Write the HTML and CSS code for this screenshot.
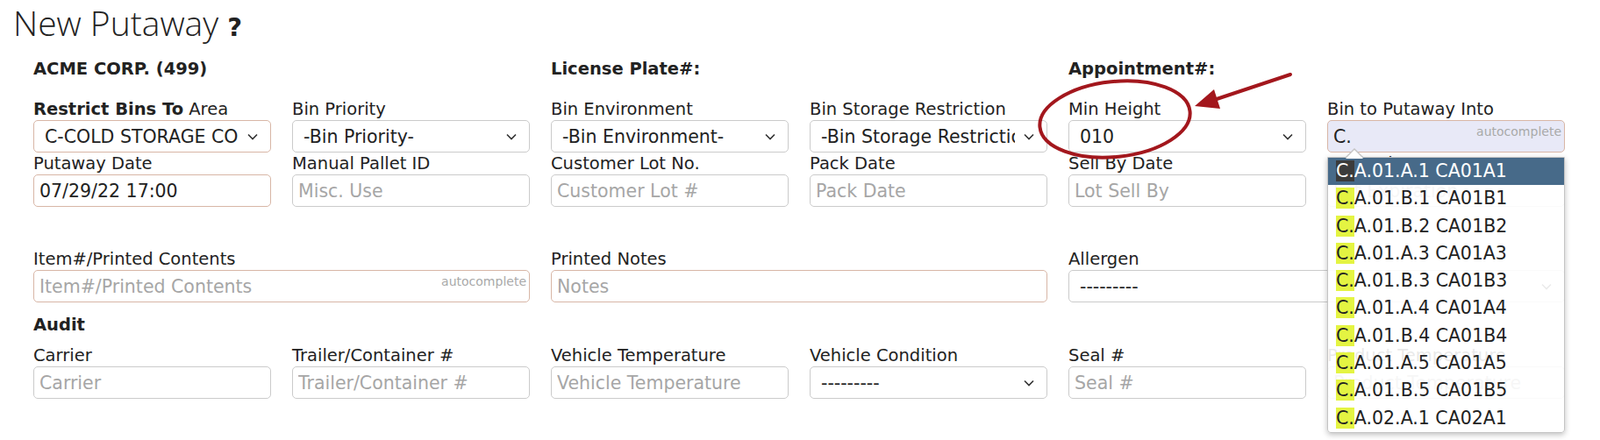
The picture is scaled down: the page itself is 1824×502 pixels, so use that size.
FILE: index.html
```html
<!DOCTYPE html>
<html lang="en">
<head>
  <meta charset="UTF-8" />
  <title>New Putaway</title>
  <link rel="stylesheet" href="styles.css">
</head>
<body>
<div class="page">

  <h1 class="page-title">New Putaway <span class="help">?</span></h1>

  <form class="putaway-form">

    <!-- Header info -->
    <div class="grid info-row">
      <div class="span-2">ACME CORP. (499)</div>
      <div class="span-2">License Plate#:</div>
      <div class="span-2">Appointment#:</div>
    </div>

    <!-- Bin selection -->
    <div class="grid field-row first-row">
      <div class="field">
        <label><b>Restrict Bins To</b> Area</label>
        <div class="select-wrap">
          <select class="control required"><option>C-COLD STORAGE COOLER</option></select>
          <svg class="chevron" width="12" height="8" viewBox="0 0 12 8"><path d="M1 1.5 L6 6.5 L11 1.5" /></svg>
        </div>
      </div>
      <div class="field">
        <label>Bin Priority</label>
        <div class="select-wrap">
          <select class="control"><option>-Bin Priority-</option></select>
          <svg class="chevron" width="12" height="8" viewBox="0 0 12 8"><path d="M1 1.5 L6 6.5 L11 1.5" /></svg>
        </div>
      </div>
      <div class="field">
        <label>Bin Environment</label>
        <div class="select-wrap">
          <select class="control"><option>-Bin Environment-</option></select>
          <svg class="chevron" width="12" height="8" viewBox="0 0 12 8"><path d="M1 1.5 L6 6.5 L11 1.5" /></svg>
        </div>
      </div>
      <div class="field">
        <label>Bin Storage Restriction</label>
        <div class="select-wrap">
          <select class="control"><option>-Bin Storage Restriction-</option></select>
          <svg class="chevron" width="12" height="8" viewBox="0 0 12 8"><path d="M1 1.5 L6 6.5 L11 1.5" /></svg>
        </div>
      </div>
      <div class="field">
        <label>Min Height</label>
        <div class="select-wrap">
          <select class="control"><option>010</option></select>
          <svg class="chevron" width="12" height="8" viewBox="0 0 12 8"><path d="M1 1.5 L6 6.5 L11 1.5" /></svg>
        </div>
      </div>
      <div class="field">
        <label>Bin to Putaway Into</label>
        <div class="input-wrap">
          <input type="text" class="control required lookup" value="C." />
          <span class="hint">autocomplete</span>

          <!-- Autocomplete results -->
          <ul class="ac-menu">
            <li class="active"><mark>C.</mark>A.01.A.1 CA01A1</li>
            <li><mark>C.</mark>A.01.B.1 CA01B1</li>
            <li><mark>C.</mark>A.01.B.2 CA01B2</li>
            <li><mark>C.</mark>A.01.A.3 CA01A3</li>
            <li><mark>C.</mark>A.01.B.3 CA01B3</li>
            <li><mark>C.</mark>A.01.A.4 CA01A4</li>
            <li><mark>C.</mark>A.01.B.4 CA01B4</li>
            <li><mark>C.</mark>A.01.A.5 CA01A5</li>
            <li><mark>C.</mark>A.01.B.5 CA01B5</li>
            <li><mark>C.</mark>A.02.A.1 CA02A1</li>
          </ul>
        </div>
      </div>
    </div>

    <!-- Dates and lots -->
    <div class="grid field-row">
      <div class="field">
        <label>Putaway Date</label>
        <input type="text" class="control required" value="07/29/22 17:00" />
      </div>
      <div class="field">
        <label>Manual Pallet ID</label>
        <input type="text" class="control" placeholder="Misc. Use" />
      </div>
      <div class="field">
        <label>Customer Lot No.</label>
        <input type="text" class="control" placeholder="Customer Lot #" />
      </div>
      <div class="field">
        <label>Pack Date</label>
        <input type="text" class="control" placeholder="Pack Date" />
      </div>
      <div class="field">
        <label>Sell By Date</label>
        <input type="text" class="control" placeholder="Lot Sell By" />
      </div>
      <div class="field">
        <label>Expiration Date</label>
        <input type="text" class="control" placeholder="Lot Expiration" />
      </div>
    </div>

    <!-- Contents -->
    <div class="grid field-row contents-row">
      <div class="field span-2">
        <label>Item#/Printed Contents</label>
        <div class="input-wrap">
          <input type="text" class="control required" placeholder="Item#/Printed Contents" />
          <span class="hint">autocomplete</span>
        </div>
      </div>
      <div class="field span-2">
        <label>Printed Notes</label>
        <input type="text" class="control required" placeholder="Notes" />
      </div>
      <div class="field span-2">
        <label>Allergen</label>
        <div class="select-wrap">
          <select class="control"><option>---------</option></select>
          <svg class="chevron" width="12" height="8" viewBox="0 0 12 8"><path d="M1 1.5 L6 6.5 L11 1.5" /></svg>
        </div>
      </div>
    </div>

    <h3 class="section-title">Audit</h3>

    <div class="grid field-row">
      <div class="field">
        <label>Carrier</label>
        <input type="text" class="control" placeholder="Carrier" />
      </div>
      <div class="field">
        <label>Trailer/Container #</label>
        <input type="text" class="control" placeholder="Trailer/Container #" />
      </div>
      <div class="field">
        <label>Vehicle Temperature</label>
        <input type="text" class="control" placeholder="Vehicle Temperature" />
      </div>
      <div class="field">
        <label>Vehicle Condition</label>
        <div class="select-wrap">
          <select class="control"><option>---------</option></select>
          <svg class="chevron" width="12" height="8" viewBox="0 0 12 8"><path d="M1 1.5 L6 6.5 L11 1.5" /></svg>
        </div>
      </div>
      <div class="field">
        <label>Seal #</label>
        <input type="text" class="control" placeholder="Seal #" />
      </div>
      <div class="field">
        <label>Product Temperature</label>
        <input type="text" class="control" placeholder="Product Temperature" />
      </div>
    </div>

  </form>

  <!-- Red annotation drawn over the form -->
  <svg class="annotation" width="1824" height="502" viewBox="0 0 1824 502">
    <ellipse cx="1271" cy="136" rx="86" ry="43" transform="rotate(-6 1271 136)" />
    <line x1="1471" y1="85" x2="1384" y2="114" />
    <polygon points="1362,121 1384,102 1391,124" />
  </svg>

</div>
</body>
</html>
```

FILE: styles.css
```css
body {
  margin: 0;
  font-family: "DejaVu Sans", Verdana, sans-serif;
  font-size: 19.5px;
  color: #222;
  background: #fff;
}

.page {
  position: relative;
  height: 502px;
  overflow: hidden;
}

.page-title {
  font-family: "Open Sans", "Noto Sans", sans-serif;
  font-weight: 300;
  font-size: 39px;
  line-height: 45px;
  margin: 0;
  padding: 3px 0 0 15px;
  color: #222;
}

.page-title .help {
  font-family: "DejaVu Sans", sans-serif;
  font-weight: bold;
  font-size: 29px;
}

.putaway-form {
  padding: 0 40px 0 38px;
}

.grid {
  display: grid;
  grid-template-columns: repeat(6, 1fr);
  column-gap: 24px;
}

.span-2 {
  grid-column: span 2;
}

.info-row {
  margin-top: 12px;
  font-weight: bold;
  line-height: 25px;
}

.first-row {
  margin-top: 21px;
}

.contents-row {
  margin-top: 47px;
}

.field {
  min-width: 0;
}

.field label {
  display: block;
  line-height: 25px;
  white-space: nowrap;
}

.control {
  display: block;
  width: 100%;
  height: 37px;
  box-sizing: border-box;
  margin: 0;
  padding: 0 6px;
  border: 1px solid #cbcbcb;
  border-radius: 5px;
  background: #fff;
  font-family: inherit;
  font-size: 20.5px;
  color: #222;
  outline: none;
}

.control.required {
  border-color: #d8b6a6;
}

.control::placeholder {
  color: #a6a6a6;
}

select.control {
  appearance: none;
  -webkit-appearance: none;
  padding: 0 36px 0 12px;
}

.select-wrap,
.input-wrap {
  position: relative;
}

.chevron {
  position: absolute;
  right: 15px;
  top: 15px;
  fill: none;
  stroke: #333;
  stroke-width: 1.6;
  pointer-events: none;
}

.lookup {
  background: #e8e9f7;
}

.hint {
  position: absolute;
  right: 4px;
  top: 5px;
  font-size: 14px;
  color: #a9a9a9;
  pointer-events: none;
}

.section-title {
  margin: 13px 0 10px;
  font-size: 19.5px;
  line-height: 25px;
}

/* Autocomplete dropdown */
.ac-menu {
  position: absolute;
  left: 0;
  right: 0;
  top: 42px;
  z-index: 5;
  margin: 0;
  padding: 0;
  list-style: none;
  background: rgba(255, 255, 255, 0.9);
  border: 1px solid #c4c4c4;
  border-radius: 0 0 4px 4px;
  box-shadow: 0 2px 6px rgba(0, 0, 0, 0.25);
}

.ac-menu::before,
.ac-menu::after {
  content: "";
  position: absolute;
  left: 20px;
  width: 0;
  height: 0;
  border: 10px solid transparent;
  border-top: none;
}

.ac-menu::before {
  top: -11px;
  border-bottom: 10px solid #c4c4c4;
}

.ac-menu::after {
  top: -9px;
  border-bottom: 10px solid #fff;
}

.ac-menu li {
  height: 31.3px;
  line-height: 31px;
  padding-left: 9px;
  white-space: nowrap;
  font-size: 20.5px;
  color: #222;
}

.ac-menu mark {
  background: #e4f442;
  color: #222;
}

.ac-menu li.active {
  background: #476a89;
  color: #fff;
}

.ac-menu li.active mark {
  background: #3b3b3b;
  color: #fff;
}

.annotation {
  position: absolute;
  left: 0;
  top: 0;
  z-index: 10;
  pointer-events: none;
}

.annotation ellipse,
.annotation line {
  fill: none;
  stroke: #a3171d;
  stroke-width: 4;
  stroke-linecap: round;
}

.annotation polygon {
  fill: #a3171d;
}
```
